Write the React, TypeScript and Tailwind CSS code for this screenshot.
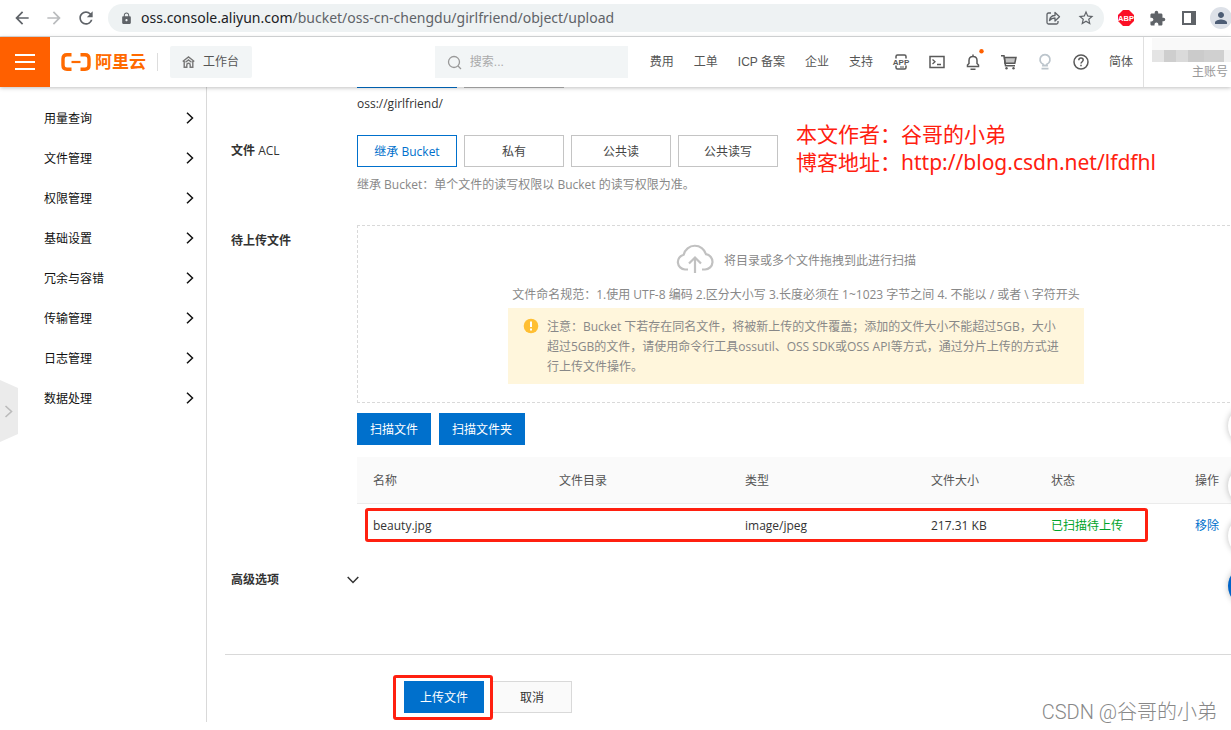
import { ReactNode } from "react";
import {
  MdArrowBack,
  MdArrowForward,
  MdExtension,
  MdLock,
  MdOutlineStarBorder,
  MdPerson,
  MdRefresh,
} from "react-icons/md";

const menu = [
  "用量查询",
  "文件管理",
  "权限管理",
  "基础设置",
  "冗余与容错",
  "传输管理",
  "日志管理",
  "数据处理",
];

const navLinks = ["费用", "工单", "ICP 备案", "企业", "支持"];

const aclOptions = ["继承 Bucket", "私有", "公共读", "公共读写"];

const BrowserBar = () => {
  return (
    <div className="flex h-[37px] items-center border-b border-[#dadcdd] bg-white text-[#5f6368]">
      <div className="flex w-[108px] items-center gap-3 pl-3">
        <button aria-label="后退">
          <MdArrowBack size={20} />
        </button>
        <button aria-label="前进" className="text-[#babcbe]">
          <MdArrowForward size={20} />
        </button>
        <button aria-label="刷新">
          <MdRefresh size={20} />
        </button>
      </div>
      <div className="flex h-7 flex-1 items-center rounded-full bg-[#eef2f3] pl-3 pr-[9px]">
        <MdLock size={13} />
        <div className="ml-2 flex-1 whitespace-nowrap font-['Noto_Sans','Noto_Sans_CJK_SC',sans-serif] text-sm">
          <span className="text-[#202124]">oss.console.aliyun.com</span>
          /bucket/oss-cn-chengdu/girlfriend/object/upload
        </div>
        <button aria-label="分享" className="mr-4">
          <svg width="16" height="16" viewBox="0 0 16 16" fill="none" stroke="currentColor" strokeWidth="1.3">
            <path d="M6 3H3.5Q2 3 2 4.5v8Q2 14 3.5 14h8q1.500 0 1.500-1.500V11" />
            <path d="M4.500 10.500C5 7.500 7 5.500 10 5.500V2.500l4.500 4.300-4.500 4.200V8C7.500 8 6 8.700 4.500 10.500z" strokeLinejoin="round" />
          </svg>
        </button>
        <button aria-label="收藏">
          <MdOutlineStarBorder size={18} />
        </button>
      </div>
      <div className="flex w-[127px] items-center gap-[15px] overflow-hidden pl-[14px]">
        <svg className="shrink-0" width="16" height="16" viewBox="0 0 16 16">
          <path d="M5 0h6l5 5v6l-5 5H5l-5-5V5z" fill="#fb0f25" />
          <text x="8" y="10.700" fill="#fff" fontSize="7.500" fontWeight="700" textAnchor="middle" fontFamily="Liberation Sans">
            ABP
          </text>
        </svg>
        <MdExtension size={17} className="shrink-0" />
        <svg className="shrink-0" width="16" height="16" viewBox="0 0 16 16">
          <path d="M1 1h14v14H1zM3 3v10h7V3z" fill="currentColor" fillRule="evenodd" />
        </svg>
        <span className="-ml-0.5 flex size-[22px] shrink-0 items-center justify-center rounded-full bg-[#dde1e8] text-[#4d5d75]">
          <MdPerson size={18} />
        </span>
      </div>
    </div>
  );
};

const IconButton = ({ label, children }: { label: string; children: ReactNode }) => {
  return (
    <button aria-label={label} className="flex w-9 shrink-0 justify-center text-[#595959]">
      <svg width="18" height="18" viewBox="0 0 18 18" fill="none" stroke="currentColor" strokeWidth="1.5" overflow="visible">
        {children}
      </svg>
    </button>
  );
};

const Header = () => {
  return (
    <header className="relative z-10 flex h-[50px] items-center bg-white font-['Liberation_Sans','Noto_Sans_CJK_SC',sans-serif] text-[#555] shadow-[0_1px_4px_rgba(0,0,0,0.25)]">
      <button aria-label="菜单" className="flex size-[50px] shrink-0 items-center justify-center bg-[#ff6000]">
        <svg width="20" height="16" viewBox="0 0 20 16" fill="#fff">
          <path d="M0 0h20v2H0zM0 7h20v2H0zM0 14h20v2H0z" />
        </svg>
      </button>
      <a href="#home" className="flex items-center gap-1 pl-[11px] text-[#ff6a00]">
        <svg width="30" height="18" viewBox="0 0 30 18" fill="none" stroke="currentColor">
          <path d="M10.500 1.700H6Q2 1.700 2 5.700v6.600Q2 16.300 6 16.300h4.500M19.500 1.700H24q4 0 4 4v6.600q0 4-4 4h-4.500" strokeWidth="3.400" />
          <path d="M10.500 9h9" strokeWidth="2.200" />
        </svg>
        <span className="w-[51px] whitespace-nowrap pt-0.5 text-[17px] font-bold leading-5">阿里云</span>
      </a>
      <div className="ml-[11px] h-[18px] w-px shrink-0 bg-[#ddd]" />
      <button className="ml-3 flex h-8 w-[82px] shrink-0 items-center gap-2 rounded-xs bg-[#f2f5f6] pl-3">
        <svg width="13" height="12" viewBox="0 0 13 12" fill="none" stroke="#777" strokeWidth="1.400">
          <path d="M.700 5.500 6.500 1l5.800 4.500M2.200 5v6.200h2.600V9q0-1.700 1.700-1.700T8.200 9v2.200h2.600V5" />
          <path d="M3.500 6.300 6.500 4l3 2.300" />
        </svg>
        工作台
      </button>
      <div className="ml-auto flex h-full items-center">
        <label className="mr-3 flex h-8 w-[193px] items-center gap-2 bg-[#f2f5f6] pl-3">
          <svg width="15" height="15" viewBox="0 0 15 15" fill="none" stroke="#999" strokeWidth="1.300">
            <circle cx="7" cy="7" r="5.500" />
            <path d="m11 11 3 3" />
          </svg>
          <input
            type="search"
            aria-label="搜索"
            placeholder="搜索..."
            className="w-36 bg-transparent outline-none placeholder:text-[#aaa]"
          />
        </label>
        {navLinks.map((link) => (
          <a key={link} href="#nav" className="whitespace-nowrap px-2.5">
            {link}
          </a>
        ))}
        <IconButton label="APP">
          <path d="M4 5.500V3.500Q4 2 5.500 2h7Q14 2 14 3.500v2M4 12.500v2Q4 16 5.500 16h7q1.500 0 1.500-1.500v-2" />
          <path d="M8 14h4" strokeWidth="1" />
          <text x="9" y="11.500" fill="currentColor" stroke="none" fontSize="8" fontWeight="700" textAnchor="middle" fontFamily="Liberation Sans">
            APP
          </text>
        </IconButton>
        <IconButton label="终端">
          <path d="M2 3.500h14v11H2z" />
          <path d="m4.500 6.500 2.500 2.300-2.500 2.300M9 11.500h4" strokeWidth="1.300" />
        </IconButton>
        <IconButton label="通知">
          <path d="M3.500 13.500V12L5 10.500V7.500q0-4 4-4t4 4v3l1.500 1.500v1.500zM9 1.500v2M6.500 16.200h5" />
          <circle cx="17.500" cy="-1.800" r="2.200" fill="#ff6000" stroke="none" />
        </IconButton>
        <IconButton label="购物车">
          <path d="M1 2.700h3l1.500 10h9.500" />
          <path d="M4.500 4.500H16l-1.200 5.700H5z" fill="currentColor" fillOpacity=".35" />
          <circle cx="6.500" cy="15.300" r="1.200" fill="currentColor" stroke="none" />
          <circle cx="13.500" cy="15.300" r="1.200" fill="currentColor" stroke="none" />
        </IconButton>
        <IconButton label="提示">
          <g stroke="#bcc5cc" strokeWidth="1.800">
            <path d="M7 12.500v-1.300a5 5 0 1 1 4 0v1.300zM5.500 15.700h7" />
          </g>
        </IconButton>
        <IconButton label="帮助">
          <circle cx="9" cy="9" r="7" />
          <path d="M6.800 7.300q0-2.200 2.200-2.200t2.200 2c0 1.600-2.200 1.700-2.200 3.500M9 11.800v1.500" />
        </IconButton>
        <button className="whitespace-nowrap px-2.5">简体</button>
        <div className="flex h-full w-[88px] flex-col items-end border-l border-[#e0e0e0] pt-px">
          <div className="flex h-6 w-[79px] bg-[#f9f9f9] pt-3">
            <div className="w-3 bg-[#e4e4e4]" />
            <div className="w-3 bg-[#cecece]" />
            <div className="w-3 bg-[#dadada]" />
            <div className="w-4 bg-[#cbcbcb]" />
            <div className="w-5 bg-[#d0d0d0]" />
            <div className="flex-1 bg-[#f0f0f0]" />
          </div>
          <span className="mr-[3px] text-[#999]">主账号</span>
        </div>
      </div>
    </header>
  );
};

const Sidebar = () => {
  return (
    <nav className="w-[207px] shrink-0 border-r border-[#d9d9d9] pt-3 text-[#111]">
      {menu.map((item) => (
        <a key={item} href="#menu" className="flex h-10 items-center justify-between pl-11 pr-3">
          {item}
          <svg width="8" height="14" viewBox="0 0 8 14" fill="none" stroke="currentColor" strokeWidth="1.500">
            <path d="m1 .700 5.500 5.300L1 11.300" />
          </svg>
        </a>
      ))}
    </nav>
  );
};

const Field = ({ label, children }: { label: ReactNode; children?: ReactNode }) => {
  return (
    <section className="grid grid-cols-[126px_1fr] pl-1.5">
      <h2 className="h-8 font-bold leading-8">{label}</h2>
      <div>{children}</div>
    </section>
  );
};

const DropZone = () => {
  return (
    <div className="flex flex-col items-center border border-dashed border-[#d9d9d9] pb-[18px] pt-[19px] text-[#888]">
      <div className="flex h-8 items-center gap-2.5">
        <svg width="38" height="34" viewBox="0 0 38 34" fill="none" stroke="#c1c1c1" strokeWidth="2.200">
          <path d="M12 25.500H9a7.500 7.500 0 0 1-1.300-14.800A11.500 11.500 0 0 1 30 10.200a7.700 7.700 0 0 1-1 15.300h-3" />
          <path d="M19 29V14M13 19.500l6-6 6 6" />
        </svg>
        将目录或多个文件拖拽到此进行扫描
      </div>
      <p className="mt-2 whitespace-nowrap">
        文件命名规范：1.使用 UTF-8 编码 2.区分大小写 3.长度必须在 1~1023 字节之间 4. 不能以 / 或者 \ 字符开头
      </p>
      <div className="mt-[3px] flex w-[576px] gap-2 bg-[#fff6dc] pb-[7px] pl-[15px] pr-5 pt-[9px]">
        <svg className="mt-px shrink-0" width="16" height="16" viewBox="0 0 16 16">
          <circle cx="8" cy="8" r="7.300" fill="#ffbf33" />
          <path d="M7 3.500h2v5.500H7zM7 10.500h2v2H7z" fill="#fff" />
        </svg>
        <p>
          注意：Bucket 下若存在同名文件，将被新上传的文件覆盖；添加的文件大小不能超过5GB，大小超过5GB的文件，请使用命令行工具ossutil、OSS
          SDK或OSS API等方式，通过分片上传的方式进行上传文件操作。
        </p>
      </div>
    </div>
  );
};

const FileTable = () => {
  return (
    <table className="mt-3 w-full table-fixed text-left">
      <thead className="border-b border-[#ebebeb] bg-[#fafafa] text-[#555]">
        <tr className="h-[46px]">
          <th className="pl-4 pt-0.5 font-normal">名称</th>
          <th className="pl-4 pt-0.5 font-normal">文件目录</th>
          <th className="pl-4 pt-0.5 font-normal">类型</th>
          <th className="w-[120px] pl-4 pt-0.5 font-normal">文件大小</th>
          <th className="w-36 pl-4 pt-0.5 font-normal">状态</th>
          <th className="w-14 pl-4 pt-0.5 font-normal">操作</th>
        </tr>
      </thead>
      <tbody>
        <tr className="h-[45px]">
          <td className="pl-4">beauty.jpg</td>
          <td />
          <td className="pl-4">image/jpeg</td>
          <td className="pl-4">217.31 KB</td>
          <td className="pl-4 text-[#00a32a]">已扫描待上传</td>
          <td className="pl-4 text-[#0070cc]">
            <button>移除</button>
          </td>
        </tr>
      </tbody>
    </table>
  );
};

const App = () => {
  return (
    <div className="relative min-h-screen overflow-hidden bg-white font-['Open_Sans','Noto_Sans_CJK_SC',sans-serif] text-xs leading-5 text-[#333]">
      <BrowserBar />
      <Header />
      <div className="flex overflow-hidden">
        <Sidebar />
        <main className="-mr-1 min-w-0 flex-1 pb-[9px] pl-[18px]">
          {/* scrolled under the header, only the bottom edge shows */}
          <div className="-mt-[31px] ml-[132px] flex gap-[7px]">
            <button aria-label="当前目录" className="h-8 w-[100px] border border-[#0070cc]" />
            <button aria-label="指定目录" className="h-8 w-[100px] border border-[#b5b5b5]" />
          </div>
          <p className="mb-[15px] ml-[132px] leading-8">oss://girlfriend/</p>

          <Field
            label={
              <>
                文件 <span className="font-normal">ACL</span>
              </>
            }
          >
            <div className="flex gap-[7px]">
              {aclOptions.map((option, i) => (
                <button
                  key={option}
                  className={
                    i === 0
                      ? "h-8 w-[100px] border border-[#0070cc] pt-0.5 text-[#0070cc]"
                      : "h-8 w-[100px] border border-[#c4c4c4] pt-0.5 text-[#444]"
                  }
                >
                  {option}
                </button>
              ))}
            </div>
            <p className="mb-[30px] mt-2 text-[#888]">
              继承 Bucket：单个文件的读写权限以 Bucket 的读写权限为准。
            </p>
          </Field>

          <Field label="待上传文件">
            <DropZone />
            <div className="mt-2.5 flex gap-2 text-white">
              <button className="h-8 bg-[#0070cc] px-[13px] pt-0.5">扫描文件</button>
              <button className="h-8 bg-[#0070cc] px-[13px] pt-0.5">扫描文件夹</button>
            </div>
            <FileTable />
          </Field>

          <button className="mt-4 flex h-8 w-[134px] items-center justify-between pl-1.5 font-bold">
            高级选项
            <svg width="12" height="8" viewBox="0 0 12 8" fill="none" stroke="currentColor" strokeWidth="1.500">
              <path d="m.700 1 5.300 5.500L11.300 1" />
            </svg>
          </button>

          <div className="mt-[58px] flex gap-2 border-t border-[#d9d9d9] pl-[179px] pt-[26px]">
            <button className="h-8 w-20 bg-[#0070cc] pt-0.5 text-white">上传文件</button>
            <button className="h-8 w-20 border border-[#d9d9d9] bg-[#fafafa] pt-0.5">取消</button>
          </div>
        </main>
      </div>

      {/* sidebar toggle */}
      <button aria-label="展开" className="absolute left-0 top-[380px]">
        <svg width="18" height="62" viewBox="0 0 18 62" fill="none">
          <path d="M0 0l18 8v46L0 62z" fill="#ebebeb" />
          <path d="m5.500 26 6 5.500-6 5.500" stroke="#bbb" strokeWidth="1.600" />
        </svg>
      </button>

      {/* floating tools */}
      <div className="absolute left-full top-[406px] -ml-[3px]">
        <div className="mb-5 size-10 rounded-full bg-white shadow-[0_0_6px_rgba(0,0,0,0.25)]" />
        <div className="mb-2.5 size-10 rounded-full bg-white shadow-[0_0_6px_rgba(0,0,0,0.25)]" />
        <div className="mb-2.5 size-10 rounded-full bg-white shadow-[0_0_6px_rgba(0,0,0,0.25)]" />
        <div className="size-10 rounded-full bg-[#0064c8] shadow-[0_0_6px_rgba(0,0,0,0.25)]" />
      </div>

      {/* annotations */}
      <div className="absolute left-[796px] top-[120px] whitespace-nowrap font-['Noto_Sans','Noto_Sans_CJK_SC',sans-serif] text-[21px] leading-7 text-[#ff2010]">
        本文作者：谷哥的小弟
        <br />
        博客地址：http://blog.csdn.net/lfdfhl
      </div>
      <div className="pointer-events-none absolute left-[365px] top-[508px] h-[34px] w-[783px] rounded-[3px] border-3 border-[#ff2010]" />
      <div className="pointer-events-none absolute left-[393px] top-[675px] h-[45px] w-[100px] rounded-[3px] border-3 border-[#ff2010]" />
      <div className="absolute bottom-1 right-[14px] whitespace-nowrap font-[Roboto,'Noto_Sans_CJK_SC',sans-serif] text-xl font-light text-[#888]">
        CSDN @谷哥的小弟
      </div>
    </div>
  );
};

export default App;
